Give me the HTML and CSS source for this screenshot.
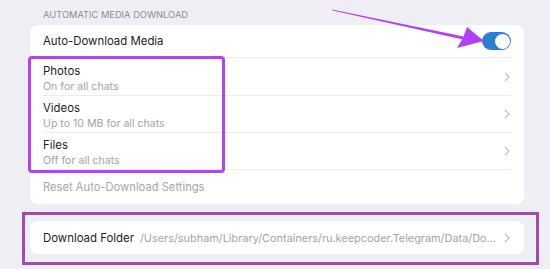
FILE: index.html
```html
<!DOCTYPE html>
<html>
<head>
<meta charset="utf-8">
<link rel="stylesheet" href="styles.css">
</head>
<body>
<div class="page">
  <div class="section-title">AUTOMATIC MEDIA DOWNLOAD</div>
  <div class="card">
    <div class="row row-toggle">
      <span class="label">Auto-Download Media</span>
      <span class="toggle"><span class="knob"></span></span>
    </div>
    <div class="row row-two row-first">
      <div class="texts"><span class="label">Photos</span><span class="sub">On for all chats</span></div>
      <svg class="chev" width="6" height="10" viewBox="0 0 6 10"><path d="M1 1l4 4-4 4" fill="none" stroke="#c4c4c8" stroke-width="1.3"/></svg>
    </div>
    <div class="row row-two">
      <div class="texts"><span class="label">Videos</span><span class="sub">Up to 10 MB for all chats</span></div>
      <svg class="chev" width="6" height="10" viewBox="0 0 6 10"><path d="M1 1l4 4-4 4" fill="none" stroke="#c4c4c8" stroke-width="1.3"/></svg>
    </div>
    <div class="row row-two">
      <div class="texts"><span class="label">Files</span><span class="sub">Off for all chats</span></div>
      <svg class="chev" width="6" height="10" viewBox="0 0 6 10"><path d="M1 1l4 4-4 4" fill="none" stroke="#c4c4c8" stroke-width="1.3"/></svg>
    </div>
    <div class="row row-reset">
      <span class="reset">Reset Auto-Download Settings</span>
    </div>
  </div>
  <div class="card card-folder">
    <div class="row row-folder">
      <span class="label folder-label">Download Folder</span>
      <span class="path">/Users/subham/Library/Containers/ru.keepcoder.Telegram/Data/Do...</span>
      <svg class="chev" width="6" height="10" viewBox="0 0 6 10"><path d="M1 1l4 4-4 4" fill="none" stroke="#c4c4c8" stroke-width="1.3"/></svg>
    </div>
  </div>
</div>
<div class="hl hl-one"></div>
<div class="hl hl-two"></div>
<svg class="arrow" width="550" height="269" viewBox="0 0 550 269">
  <polygon points="332,9.6 332.6,10.6 463,39.6 463.6,36.4" fill="#b440f5"/>
  <polygon points="484,41 467,27 463,38 457,48" fill="#b440f5"/>
</svg>
</body>
</html>
```
FILE: styles.css
```css
* {
  box-sizing: border-box;
}
html, body {
  margin: 0;
  padding: 0;
}
body {
  width: 550px;
  height: 269px;
  background: #efeef4;
  font-family: Inter, "Liberation Sans", sans-serif;
  overflow: hidden;
  position: relative;
}
.page {
  padding: 9px 26px 0 30px;
  display: flex;
  flex-direction: column;
}
.section-title {
  font-size: 9.3px;
  color: #8d8d92;
  padding-left: 13px;
  height: 16px;
  line-height: 12px;
}
.card {
  background: #fff;
  border-radius: 8px;
  display: flex;
  flex-direction: column;
}
.row {
  margin: 0 13px;
  display: flex;
  align-items: center;
  justify-content: space-between;
  border-bottom: 1px solid #ededf0;
}
.row-toggle {
  height: 33px;
}
.row-two {
  height: 37px;
  padding-top: 3px;
}
.row-first {
  height: 38px;
}
.row-reset {
  height: 34px;
  border-bottom: none;
}
.texts {
  display: flex;
  flex-direction: column;
  gap: 2px;
}
.label {
  font-size: 11.4px;
  color: #1d1d1f;
  line-height: 14px;
  white-space: nowrap;
}
.sub {
  font-size: 10.6px;
  color: #a3a3a8;
  line-height: 13px;
}
.reset {
  font-size: 11.2px;
  color: #a6a6aa;
}
.chev {
  margin-right: 1px;
  flex-shrink: 0;
}
.row-two .chev {
  margin-top: -3px;
}
.toggle {
  width: 29px;
  height: 18px;
  border-radius: 9px;
  background: #2a7fd4;
  display: flex;
  align-items: center;
  justify-content: flex-end;
  padding: 0 1.5px;
}
.knob {
  width: 15px;
  height: 15px;
  border-radius: 50%;
  background: #fff;
}
.card-folder {
  margin-top: 17px;
  height: 33px;
  justify-content: center;
}
.row-folder {
  border-bottom: none;
  justify-content: flex-start;
}
.folder-label {
  flex-shrink: 0;
  margin-right: 6px;
}
.path {
  font-size: 10.9px;
  color: #a3a3a8;
  white-space: nowrap;
  overflow: hidden;
  flex: 1;
}
.hl {
  position: absolute;
}
.hl-one {
  left: 28px;
  top: 56px;
  width: 197px;
  height: 117px;
  border: 3px solid #b441f6;
  border-radius: 4px;
}
.hl-two {
  left: 22px;
  top: 212px;
  width: 517px;
  height: 53px;
  border: 3.5px solid #a54aab;
}
.arrow {
  position: absolute;
  left: 0;
  top: 0;
}
```
